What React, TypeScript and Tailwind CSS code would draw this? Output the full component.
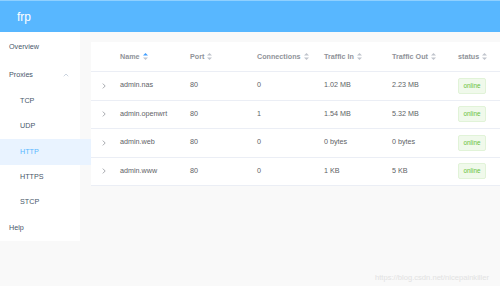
import { ChevronUp } from "lucide-react";

interface Proxy {
  name: string;
  port: number;
  conns: number;
  trafficIn: string;
  trafficOut: string;
  status: string;
}

const proxies: Proxy[] = [
  { name: "admin.nas", port: 80, conns: 0, trafficIn: "1.02 MB", trafficOut: "2.23 MB", status: "online" },
  { name: "admin.openwrt", port: 80, conns: 1, trafficIn: "1.54 MB", trafficOut: "5.32 MB", status: "online" },
  { name: "admin.web", port: 80, conns: 0, trafficIn: "0 bytes", trafficOut: "0 bytes", status: "online" },
  { name: "admin.www", port: 80, conns: 0, trafficIn: "1 KB", trafficOut: "5 KB", status: "online" },
];

const columns = ["Name", "Port", "Connections", "Traffic In", "Traffic Out", "status"];

function SortCaret({ active }: { active?: boolean }) {
  return (
    <svg width="5" height="7" viewBox="0 0 5 7" className="ml-[3px] shrink-0">
      <path d="M2.5 0 L5 2.6 L0 2.6 Z" fill={active ? "#409eff" : "#c0c4cc"} />
      <path d="M2.5 7 L5 4.4 L0 4.4 Z" fill="#c0c4cc" />
    </svg>
  );
}

function ExpandArrow() {
  return (
    <svg width="4" height="6" viewBox="0 0 4 6">
      <path d="M0.8 0.6 L3.2 3 L0.8 5.4" fill="none" stroke="#909399" strokeWidth="0.8" />
    </svg>
  );
}

const gridCols = "grid grid-cols-[19px_70px_67px_67px_68px_66px_70px]";

function ProxyTable() {
  return (
    <div className="bg-white w-[420px] text-[7.2px]">
      <div className={`${gridCols} h-[30px] items-center border-b border-[#ebeef5]`}>
        <div />
        {columns.map((c, i) => (
          <div key={c} className="flex items-center pl-[10px] pt-[1px] font-bold text-[#909399]">
            {c}
            <SortCaret active={i === 0} />
          </div>
        ))}
      </div>
      {proxies.map((p) => (
        <div
          key={p.name}
          className={`${gridCols} h-[28.5px] items-center border-b border-[#ebeef5] text-[#606266]`}
        >
          <div className="flex justify-end pr-[4px]">
            <ExpandArrow />
          </div>
          <div className="pl-[10px]">{p.name}</div>
          <div className="pl-[10px]">{p.port}</div>
          <div className="pl-[10px]">{p.conns}</div>
          <div className="pl-[10px]">{p.trafficIn}</div>
          <div className="pl-[10px]">{p.trafficOut}</div>
          <div className="pl-[10px]">
            <span className="inline-flex items-center justify-center w-[28px] h-[16px] rounded-[2px] border border-[#e1f3d8] bg-[#f0f9eb] text-[#67c23a] text-[6.4px]">
              {p.status}
            </span>
          </div>
        </div>
      ))}
    </div>
  );
}

function Sidebar() {
  const sub = ["TCP", "UDP", "HTTP", "HTTPS", "STCP"];
  return (
    <div className="w-[80px] h-[209px] bg-white pt-[1px] text-[7.2px] text-[#48576a]">
      <div className="h-[28px] flex items-center pl-[9px]">Overview</div>
      <div className="h-[28px] flex items-center pl-[9px] justify-between pr-[10px]">
        Proxies
        <ChevronUp size={8} strokeWidth={1.5} className="text-[#97a8be]" />
      </div>
      {sub.map((s) => (
        <div
          key={s}
          className={
            s === "HTTP"
              ? "h-[25.2px] w-[91px] flex items-center pl-[20px] bg-[#e9f3ff] text-[#58b7ff]"
              : "h-[25.2px] flex items-center pl-[20px]"
          }
        >
          {s}
        </div>
      ))}
      <div className="h-[26px] flex items-center pl-[9px]">Help</div>
    </div>
  );
}

export default function App() {
  return (
    <div className="relative w-[500px] h-[286px] overflow-hidden bg-[#f9f9f9] flex flex-col font-['Liberation_Sans',Arial,sans-serif]">
      <div className="h-[32px] shrink-0 bg-[#58b7ff] border-t border-[#8fd0ff] flex items-center pl-[17px] text-white text-[12px]">
        frp
      </div>
      <div className="flex flex-1">
        <Sidebar />
        <div className="flex-1 pl-[11px] pt-[10px] overflow-hidden">
          <ProxyTable />
        </div>
      </div>
      <div className="absolute left-[375px] top-[272px] text-[7.6px] text-[#e2e2e2]">
        https://blog.csdn.net/nicepainkiller
      </div>
    </div>
  );
}
